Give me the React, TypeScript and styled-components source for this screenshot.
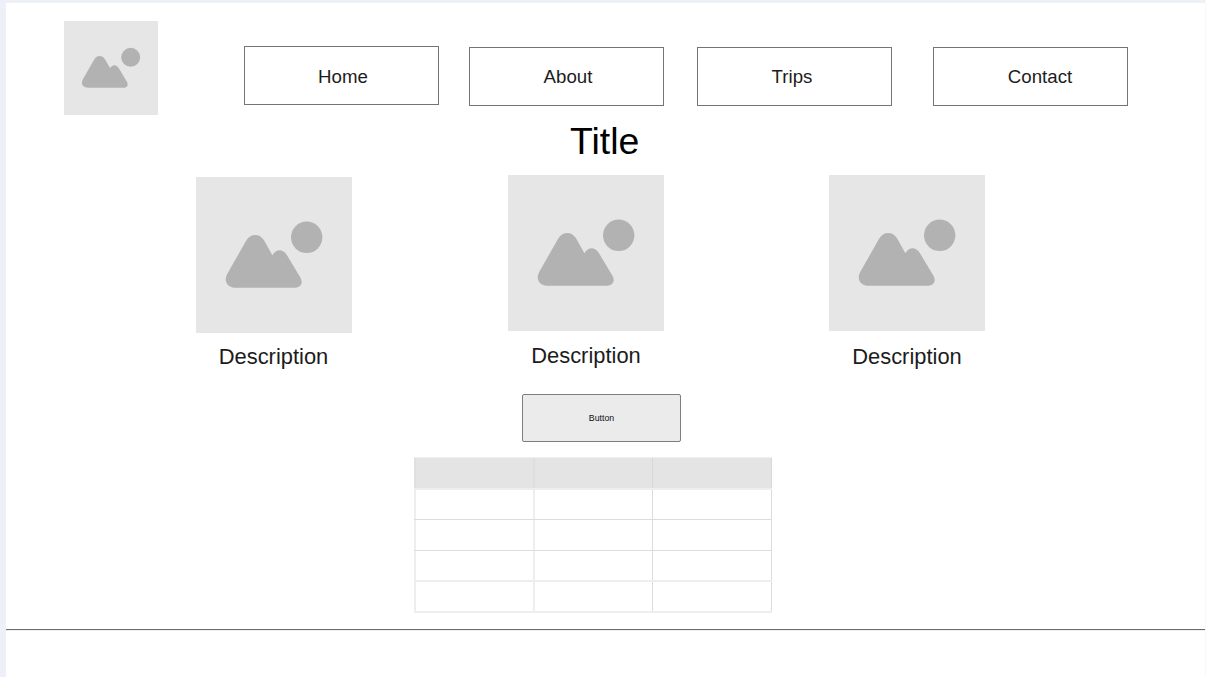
import React from "react";
import styled, { createGlobalStyle } from "styled-components";

const GlobalStyle = createGlobalStyle`
  * { box-sizing: border-box; }
  body {
    margin: 0;
    background: #edf1f7;
    font-family: "Liberation Sans", Arial, sans-serif;
    overflow: hidden;
  }
`;

const Frame = styled.div`
  height: 677px;
  padding: 3px 1px 0 6px;
  background: linear-gradient(to right, #edf1f7 1205px, #f6f8fb 1205px);
`;

const Canvas = styled.main`
  display: flex;
  flex-direction: column;
  height: 674px;
  background: #fff;
`;

const Header = styled.header`
  display: flex;
  align-items: flex-start;
  height: 112px;
  padding: 18px 0 0 58px;
`;

const Nav = styled.nav`
  display: flex;
  padding: 25px 0 0 86px;
`;

const NavItem = styled.a<{ $gap: number; $left?: number; $right?: number; $drop?: number }>`
  display: flex;
  align-items: center;
  justify-content: center;
  width: 195px;
  height: 59px;
  margin: ${(p) => p.$drop ?? 0}px ${(p) => p.$gap}px 0 0;
  padding: ${(p) => (p.$drop ? 0 : 2)}px ${(p) => p.$right ?? 0}px 0 ${(p) => p.$left ?? 0}px;
  border: 1px solid #747474;
  color: #1c1c1c;
  font-size: 18.67px;
  line-height: 22px;
`;

const Title = styled.h1`
  height: 59px;
  margin: 0;
  padding-left: 564px;
  color: #000;
  font-size: 37.4px;
  font-weight: 400;
  line-height: 53px;
`;

const Cards = styled.section`
  display: flex;
  align-items: flex-start;
  height: 220px;
  padding-left: 189.5px;
`;

const Card = styled.figure<{ $gap: number; $top: number; $textGap: number }>`
  width: 156px;
  margin: ${(p) => p.$top}px ${(p) => p.$gap}px 0 0;

  figcaption {
    margin-top: ${(p) => p.$textGap}px;
    color: #1c1c1c;
    font-size: 21.9px;
    line-height: 26px;
    text-align: center;
  }
`;

const Picture = styled.svg<{ $size: number }>`
  display: block;
  width: ${(p) => p.$size}px;
  height: ${(p) => p.$size}px;
`;

const ActionButton = styled.button`
  width: 159px;
  height: 48px;
  margin: 0 0 0 516px;
  padding: 0;
  border: 1px solid #7d7d7d;
  border-radius: 2px;
  background: #ebebeb;
  color: #111;
  font: 8.8px/12px "Liberation Sans", Arial, sans-serif;
`;

const Table = styled.div`
  width: 358px;
  margin: 15px 0 0 408px;
  border-top: 1px solid #eee;
`;

const Row = styled.div<{ $height: number; $thick?: boolean; $head?: boolean }>`
  display: grid;
  grid-template-columns: 121px 118px 119px;
  height: ${(p) => p.$height}px;
  border-bottom: ${(p) => (p.$thick ? "2px solid #eee" : "1px solid #dcdcdc")};
  background: ${(p) => (p.$head ? "#e4e4e4" : "#fff")};
`;

const Cell = styled.div<{ $first?: boolean; $head?: boolean }>`
  border-left: ${(p) => (p.$first ? `2px solid ${p.$head ? "#e0e0e0" : "#eee"}` : "0")};
  border-right: ${(p) =>
    p.$first ? `2px solid ${p.$head ? "#dedede" : "#eee"}` : `1px solid ${p.$head ? "#d8d8d8" : "#dcdcdc"}`};
`;

const Divider = styled.hr`
  width: 100%;
  height: 2px;
  margin: 16px 0 0;
  border: 0;
  border-top: 1px solid #6c6c6c;
  background: #eee;
`;

function Placeholder({ size }: { size: number }) {
  return (
    <Picture $size={size} viewBox="0 0 156 156" aria-hidden="true">
      <rect width="156" height="156" fill="#e6e6e6" />
      <path
        d="M50.4 63.3C54.8 56.2 63.6 56.2 68 63.3L76.4 78.2C80 71.8 86.7 71.6 90.7 77.8L104.2 100.2C107.5 105.7 105.2 110.7 98.5 110.7H40.5C31.3 110.7 27.4 104.4 31.2 97Z"
        fill="#b2b2b2"
      />
      <circle cx="110.7" cy="60.3" r="15.7" fill="#b2b2b2" />
    </Picture>
  );
}

const links = [
  { label: "Home", gap: 30, left: 3, drop: 0 },
  { label: "About", gap: 33, left: 3, drop: 1 },
  { label: "Trips", gap: 41, right: 5, drop: 1 },
  { label: "Contact", gap: 0, left: 19, drop: 1 },
];

const cards = [
  { gap: 156.5, top: 3, textGap: 11 },
  { gap: 165, top: 1, textGap: 12 },
  { gap: 0, top: 1, textGap: 13 },
];

const rows = [
  { height: 32, thick: true, head: true },
  { height: 30 },
  { height: 31 },
  { height: 31, thick: true },
  { height: 31, thick: true },
];

export default function App() {
  return (
    <>
      <GlobalStyle />
      <Frame>
        <Canvas>
          <Header>
            <Placeholder size={94} />
            <Nav>
              {links.map((l) => (
                <NavItem key={l.label} $gap={l.gap} $left={l.left} $right={l.right} $drop={l.drop}>
                  {l.label}
                </NavItem>
              ))}
            </Nav>
          </Header>
          <Title>Title</Title>
          <Cards>
            {cards.map((c, i) => (
              <Card key={i} $gap={c.gap} $top={c.top} $textGap={c.textGap}>
                <Placeholder size={156} />
                <figcaption>Description</figcaption>
              </Card>
            ))}
          </Cards>
          <ActionButton>Button</ActionButton>
          <Table>
            {rows.map((r, i) => (
              <Row key={i} $height={r.height} $thick={r.thick} $head={r.head}>
                <Cell $first $head={r.head} />
                <Cell $head={r.head} />
                <Cell $head={r.head} />
              </Row>
            ))}
          </Table>
          <Divider />
        </Canvas>
      </Frame>
    </>
  );
}
